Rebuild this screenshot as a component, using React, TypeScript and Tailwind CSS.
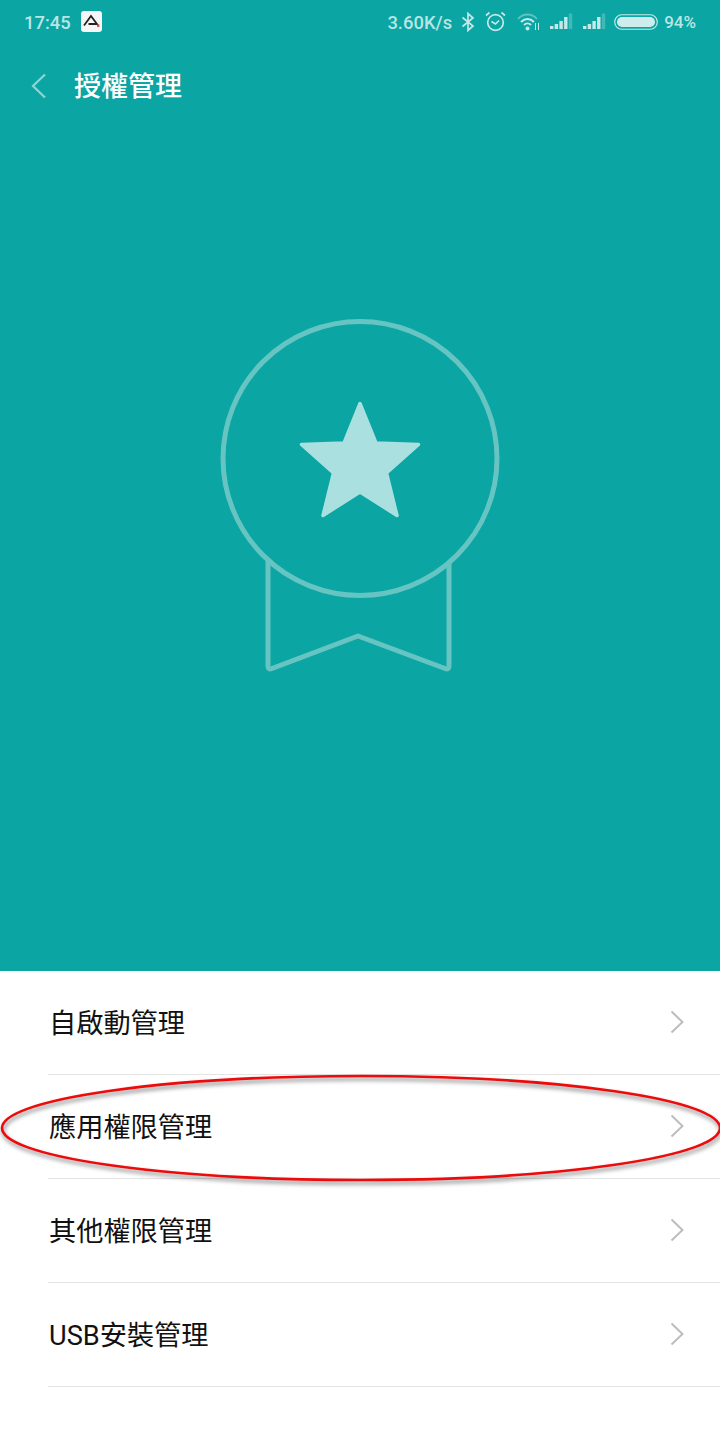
import React from "react";

const rows = ["自啟動管理", "應用權限管理", "其他權限管理", "USB安裝管理"];

const Signal = () => (
	<svg width="23" height="18" viewBox="0 0 23 18" fill="#c5e9e8">
		<rect x="0" y="13" width="3.4" height="3" />
		<rect x="4.7" y="11" width="3.4" height="5" />
		<rect x="9.4" y="8" width="3.4" height="8" />
		<rect x="14.1" y="4" width="3.4" height="12" />
		<rect x="18.8" y="0.5" width="3.4" height="15.5" opacity="0.3" />
	</svg>
);

const StatusBar = () => (
	<div className="flex h-[44px] items-center justify-between pl-6 pr-6 text-[18.4px] font-medium text-[#b9e5e4]">
		<div className="flex items-center gap-[10px]">
			<span className="pt-[2px]">17:45</span>
			<svg width="21" height="21" viewBox="0 0 21 21">
				<rect width="21" height="21" rx="3" fill="#f6f6f6" />
				<path d="M3 14.5 L10 5 L16 13 H7.5" fill="none" stroke="#222" strokeWidth="1.8" />
				<rect x="16" y="13.5" width="2.4" height="2.4" fill="#e8402a" />
			</svg>
		</div>
		<div className="flex items-center">
			<span className="pt-[2px]">3.60K/s</span>
			<svg className="ml-[9px]" width="14" height="20" viewBox="0 0 14 20" fill="none" stroke="#c5e9e8" strokeWidth="1.7">
				<path d="M1.5 5.5 L12 14 L7 18.5 V1.5 L12 6 L1.5 14.5" />
			</svg>
			<svg className="ml-[10px]" width="21" height="21" viewBox="0 0 21 21" fill="none" stroke="#c5e9e8" strokeWidth="1.7">
				<circle cx="10.5" cy="11.5" r="7.8" />
				<path d="M6.5 10.5 L10.5 13 L14 9.5" />
				<path d="M1 4.5 L4.5 1.5 M20 4.5 L16.5 1.5" />
			</svg>
			<svg className="ml-[11px]" width="24" height="20" viewBox="0 0 24 20" fill="none" stroke="#c5e9e8">
				<path d="M1 7 C6 1 15 1 20 7" strokeWidth="1.8" opacity="0.45" />
				<path d="M4 10 C8 6 13 6 17 10" strokeWidth="2" />
				<path d="M7 13 C9 11 12 11 14 13" strokeWidth="2" />
				<circle cx="10.5" cy="16.5" r="2" fill="#c5e9e8" stroke="none" />
				<path d="M18.5 11 V18 M21.5 11 V18" strokeWidth="1" />
			</svg>
			<div className="ml-[9px]">
				<Signal />
			</div>
			<div className="ml-[10px]">
				<Signal />
			</div>
			<svg className="ml-[8px]" width="44" height="18" viewBox="0 0 44 18">
				<rect x="0.75" y="1.75" width="42.5" height="14.5" rx="7" fill="none" stroke="#c5e9e8" strokeWidth="1.2" />
				<rect x="3" y="4" width="38" height="10" rx="5" fill="#cfecec" />
			</svg>
			<span className="ml-[6px] pt-[1px] text-[17px]">94%</span>
		</div>
	</div>
);

const Medal = () => (
	<svg className="mx-auto mt-[190px]" width="288" height="356" viewBox="216 318 288 356" fill="none">
		<circle cx="360" cy="458.5" r="137" stroke="#66c5c3" strokeWidth="5" />
		<path
			d="M268 561 V666 Q268 670 272 668.5 L358 636 L445 668.5 Q449 670 449 666 V562"
			stroke="#66c5c3"
			strokeWidth="5"
			strokeLinejoin="round"
		/>
		<path
			d="M360 403.5 L376 443 L418.5 444.5 L386.5 473 L397 515.5 L360 492 L323 515.5 L333.5 473 L301.5 444.5 L344 443 Z"
			fill="#aae0df"
			stroke="#aae0df"
			strokeWidth="3.5"
			strokeLinejoin="round"
		/>
	</svg>
);

const App: React.FC = () => {
	return (
		<div
			className="relative flex h-[1440px] w-[720px] flex-col overflow-hidden bg-white"
			style={{ fontFamily: 'Roboto, "Noto Sans CJK TC", sans-serif' }}
		>
			<div className="h-[971px] bg-[#0ba5a3]">
				<StatusBar />
				<div className="flex h-[84px] items-center pl-[31px]">
					<svg width="16" height="26" viewBox="0 0 16 26" fill="none" stroke="#8fd5d3" strokeWidth="2.2">
						<path d="M14 1.5 L2 13 L14 24.5" />
					</svg>
					<h1 className="ml-[27px] pt-[2px] text-[27px] font-medium text-white">授權管理</h1>
				</div>
				<Medal />
			</div>

			<ul>
				{rows.map(row => (
					<li key={row} className="pl-[48px]">
						<div className="flex h-[104px] items-center justify-between border-b border-[#e4e4e4] pr-[36px] text-[27.2px] text-[#111]">
							<span className="pl-px pt-[4px]">{row}</span>
							<svg className="mb-[2px]" width="14" height="24" viewBox="0 0 14 24" fill="none" stroke="#bdbdbd" strokeWidth="2">
								<path d="M1.5 1.5 L12.5 12 L1.5 22.5" />
							</svg>
						</div>
					</li>
				))}
			</ul>

			{/* red marker drawn over the second row */}
			<svg className="pointer-events-none absolute left-0 top-[1070px] drop-shadow-[1px_3px_2px_rgba(0,0,0,0.5)]" width="720" height="120" viewBox="0 0 720 120" fill="none">
				<ellipse cx="361" cy="58" rx="359" ry="52" stroke="#ee0a0a" strokeWidth="2.6" />
			</svg>
		</div>
	);
};

export default App;
